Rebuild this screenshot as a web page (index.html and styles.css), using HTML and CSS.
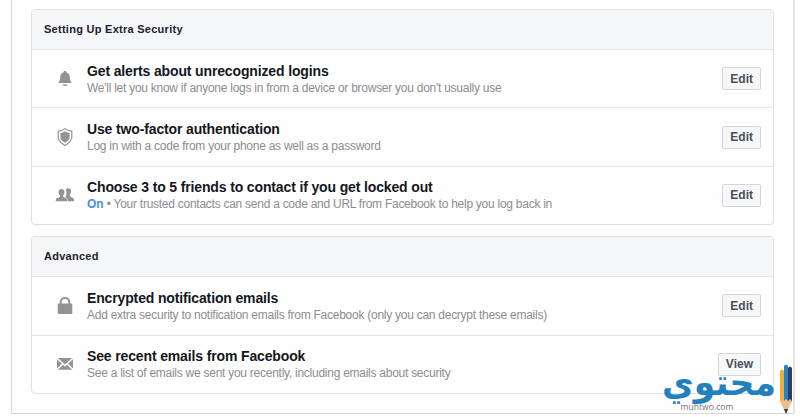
FILE: index.html
```html
<!DOCTYPE html>
<html lang="en">
<head>
<meta charset="utf-8">
<title>Security settings</title>
<link rel="stylesheet" href="styles.css">
</head>
<body>
<main class="panel">
  <section class="card">
    <h2 class="card-head">Setting Up Extra Security</h2>
    <div class="row">
      <svg class="icon" viewBox="0 0 20 20"><path d="M10 2c1 0 1.500.6 1.600 1.400C14 4 14.700 6 14.800 8.500c.1 2.500.6 3.500 1.500 4.300.4.4.2 1.200-.5 1.200H4.200c-.7 0-.9-.8-.5-1.200C4.600 12 5.100 11 5.200 8.500 5.300 6 6 4 8.400 3.400 8.500 2.600 9 2 10 2zM7.500 15.500h5c-.5 2-4.500 2-5 0z"/></svg>
      <div class="text"><h3>Get alerts about unrecognized logins</h3><p>We'll let you know if anyone logs in from a device or browser you don't usually use</p></div>
      <button class="btn">Edit</button>
    </div>
    <div class="row">
      <svg class="icon" viewBox="0 0 20 20"><path class="line" d="M10 1.600C8 3.200 5.500 4 3.200 4.100v6.100c0 3.600 3.500 6.200 6.800 8.200 3.300-2 6.800-4.600 6.800-8.200V4.100C14.500 4 12 3.200 10 1.600z"/><path d="M10 4.300c-1.500 1-3 1.500-4.600 1.700v4.200c0 2.500 2.300 4.200 4.600 5.600 2.300-1.400 4.600-3.100 4.600-5.600V6C13 5.800 11.500 5.300 10 4.300z"/></svg>
      <div class="text"><h3>Use two-factor authentication</h3><p>Log in with a code from your phone as well as a password</p></div>
      <button class="btn">Edit</button>
    </div>
    <div class="row">
      <svg class="icon" viewBox="0 0 20 20"><path d="M13.200 3.200c2 0 3 1.500 2.800 3.500-.1 1.400-.7 2.300-1.200 2.900v1.700c.7 1 4.200 1.300 4.200 3.400v1.500h-6c0-2.500-1.200-3.200-2.700-3.900 1.300-1.800 1.700-5.500.4-7.500.5-1 1.300-1.600 2.500-1.600z"/><path d="M6.500 4c2 0 3.100 1.500 2.900 3.500-.1 1.300-.6 2.200-1.200 2.800v1.500c.7 1 4.100 1.200 4.100 3.300v1.100H.8v-1.100c0-2.100 3.400-2.300 4.100-3.300v-1.500c-.7-.6-1.200-1.500-1.300-2.800C3.400 5.500 4.500 4 6.500 4z"/></svg>
      <div class="text"><h3>Choose 3 to 5 friends to contact if you get locked out</h3><p><b>On</b> • Your trusted contacts can send a code and URL from Facebook to help you log back in</p></div>
      <button class="btn">Edit</button>
    </div>
  </section>
  <section class="card">
    <h2 class="card-head">Advanced</h2>
    <div class="row">
      <svg class="icon" viewBox="0 0 20 20"><path class="shackle" d="M5.700 8V6.200C5.700 .6 14.300 .6 14.300 6.200V8"/><rect x="2.700" y="7.500" width="14.600" height="10.600" rx="1"/></svg>
      <div class="text"><h3>Encrypted notification emails</h3><p>Add extra security to notification emails from Facebook (only you can decrypt these emails)</p></div>
      <button class="btn">Edit</button>
    </div>
    <div class="row">
      <svg class="icon" viewBox="0 0 20 20"><path d="M2.800 4h14.400L10 10.500zM2 5.300l5 4.500-5 4.700zM18 5.300v9.200l-5-4.700zM8 10.700l2 1.700 2-1.700 5.200 5.100H2.800z"/></svg>
      <div class="text"><h3>See recent emails from Facebook</h3><p>See a list of emails we sent you recently, including emails about security</p></div>
      <button class="btn">View</button>
    </div>
  </section>
</main>
<svg class="watermark" viewBox="0 0 140 55">
  <text class="arabic" x="2" y="33" textLength="114" lengthAdjust="spacingAndGlyphs" direction="ltr">محتوي</text>
  <text class="domain" x="20.500" y="47.500" textLength="53" lengthAdjust="spacingAndGlyphs">muhtwo.com</text>
  <path fill="#f2ae3d" d="M120 9q2-3 4 0v31h-4z"/>
  <path fill="#2384c0" d="M124 4q2-3 4 0v36h-4z"/>
  <path fill="#303b69" d="M128 6q2-3 4 0v34h-4z"/>
  <path fill="#efbd83" d="M120 39l2-2 2 2 2-2 2 2 2-2 2 2-6 13z"/>
  <path fill="#303b50" d="M124 47h4l-2 5z"/>
</svg>
</body>
</html>
```
FILE: styles.css
```css
* { box-sizing: border-box; }
body {
  margin: 0;
  height: 417px;
  overflow: hidden;
  background: #fefefe;
  font-family: "Liberation Sans", Arial, sans-serif;
}
.panel {
  width: 784px;
  height: 414px;
  margin-left: 11px;
  padding: 9px 19px 0;
  border: solid #d9d9dc;
  border-width: 0 2px 1px 1px;
  border-right-color: #e5e5e8;
}
.card {
  width: 743px;
  margin: 0 0 11px;
  border: 1px solid #dedfe2;
  border-radius: 4px;
  background: #fefefe;
}
h2, h3, p { margin: 0; white-space: nowrap; }
.card-head {
  height: 39px;
  padding-left: 12px;
  border-radius: 3px 3px 0 0;
  background: #f5f6f7;
  color: #1d2129;
  font-size: 11px;
  line-height: 39px;
  letter-spacing: .27px;
}
.row {
  display: flex;
  align-items: center;
  height: 58.400px;
  padding: 0 12px 0 23px;
  border-top: 1px solid #e5e6e8;
}
.icon { width: 20px; height: 20px; margin-right: 12px; fill: #929397; }
.line { fill: none; stroke: #929397; stroke-width: 1.200; }
.shackle { fill: none; stroke: #929397; stroke-width: 2; }
.text { flex: 1; }
h3 { color: #14171d; font-size: 14px; line-height: 18px; letter-spacing: -.14px; }
p { color: #8b8d91; font-size: 12px; line-height: 16px; letter-spacing: -.26px; }
p b { color: #4a90e2; letter-spacing: 0; }
.btn {
  height: 23px;
  padding: 0 7px;
  border: 1px solid #d5d6da;
  border-radius: 2px;
  background: #f6f7f9;
  color: #4b4f56;
  font: bold 12px/20px "Liberation Sans", Arial, sans-serif;
}
.watermark { position: absolute; left: 660px; top: 362px; width: 140px; height: 55px; }
.arabic { fill: #2280bf; font: bold 36px "DejaVu Sans", sans-serif; }
.domain { fill: #77777b; font: 9.500px "Open Sans", sans-serif; }
```
